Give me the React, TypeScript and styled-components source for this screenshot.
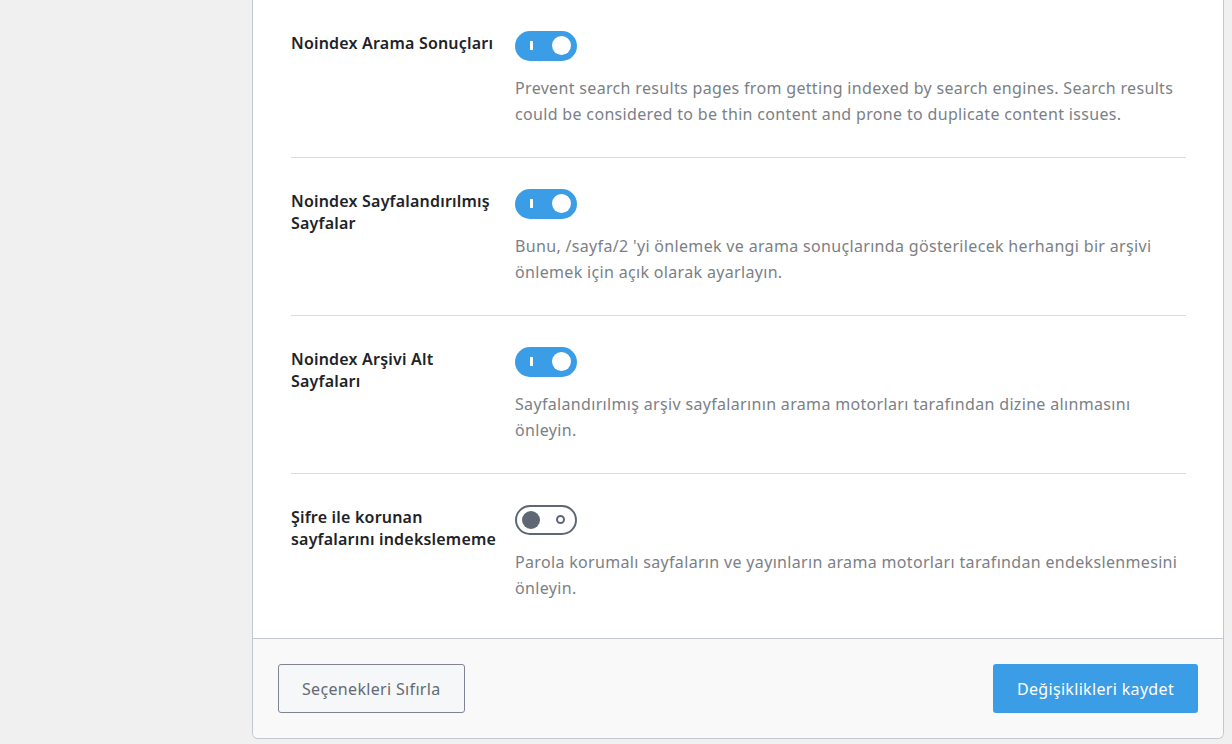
import React, { FC } from 'react';
import styled, { createGlobalStyle } from 'styled-components';

const GlobalStyle = createGlobalStyle`
    html, body {
        margin: 0;
        padding: 0;
        background: #f0f0f1;
        font-family: "Noto Sans", "Open Sans", sans-serif;
        -webkit-font-smoothing: antialiased;
    }
`;

interface SettingRowInterface {
    title: string;
    description: string;
    enabled: boolean;
    last?: boolean;
}

const Toggle: FC<{ enabled: boolean }> = ({ enabled }) => (
    <Switch $on={enabled} role="switch" aria-checked={enabled}>
        {enabled ? <OnMark /> : <OffMark />}
        <Knob $on={enabled} />
    </Switch>
);

const SettingRow: FC<SettingRowInterface> = (props) => {
    return (
        <Row $last={props.last}>
            <Label>{props.title}</Label>
            <Control>
                <Toggle enabled={props.enabled} />
                <Description>{props.description}</Description>
            </Control>
        </Row>
    );
};

const settings: Array<SettingRowInterface> = [
    {
        title: 'Noindex Arama Sonuçları',
        description: 'Prevent search results pages from getting indexed by search engines. Search results could be considered to be thin content and prone to duplicate content issues.',
        enabled: true,
    },
    {
        title: 'Noindex Sayfalandırılmış Sayfalar',
        description: "Bunu, /sayfa/2 'yi önlemek ve arama sonuçlarında gösterilecek herhangi bir arşivi önlemek için açık olarak ayarlayın.",
        enabled: true,
    },
    {
        title: 'Noindex Arşivi Alt Sayfaları',
        description: 'Sayfalandırılmış arşiv sayfalarının arama motorları tarafından dizine alınmasını önleyin.',
        enabled: true,
    },
    {
        title: 'Şifre ile korunan sayfalarını indekslememe',
        description: 'Parola korumalı sayfaların ve yayınların arama motorları tarafından endekslenmesini önleyin.',
        enabled: false,
        last: true,
    },
];

const App: FC = () => {
    return (
        <Page>
            <GlobalStyle />
            <Panel>
                <Body>
                    {settings.map((item) => (
                        <SettingRow key={item.title} {...item} />
                    ))}
                </Body>
                <Footer>
                    <ResetButton>Seçenekleri Sıfırla</ResetButton>
                    <SaveButton>Değişiklikleri kaydet</SaveButton>
                </Footer>
            </Panel>
        </Page>
    );
};

const Page = styled.div`
    min-height: 744px;
    padding-left: 252px;
    padding-right: 8px;
    box-sizing: border-box;
`;

const Panel = styled.div`
    width: 972px;
    background: #fff;
    border: 1px solid #c3c8d0;
    border-top: none;
    border-radius: 0 0 6px 6px;
    box-sizing: border-box;
    overflow: hidden;
`;

const Body = styled.div`
    padding: 0 37px 7px 38px;
`;

const Row = styled.div<{ $last?: boolean }>`
    display: flex;
    padding: 31px 0 30px;
    border-bottom: ${(p) => (p.$last ? 'none' : '1px solid #dcdcde')};
`;

const Label = styled.div`
    width: 224px;
    flex-shrink: 0;
    padding-right: 10px;
    box-sizing: border-box;
    font-size: 16px;
    font-weight: 600;
    line-height: 22px;
    letter-spacing: 0.2px;
    color: #1d2327;
    padding-top: 1px;
`;

const Control = styled.div`
    flex: 1;
    display: flex;
    flex-direction: column;
    align-items: flex-start;
`;

const Switch = styled.div<{ $on: boolean }>`
    position: relative;
    width: 62px;
    height: 30px;
    border-radius: 15px;
    box-sizing: border-box;
    background: ${(p) => (p.$on ? '#3b9de6' : '#fff')};
    border: ${(p) => (p.$on ? 'none' : '2px solid #5f6674')};
`;

const Knob = styled.span<{ $on: boolean }>`
    position: absolute;
    top: ${(p) => (p.$on ? '5px' : '4px')};
    left: ${(p) => (p.$on ? '37px' : '5px')};
    width: ${(p) => (p.$on ? '19px' : '18px')};
    height: ${(p) => (p.$on ? '19px' : '18px')};
    border-radius: 50%;
    background: ${(p) => (p.$on ? '#fff' : '#5f6674')};
`;

const OnMark = styled.span`
    position: absolute;
    left: 15px;
    top: 10px;
    width: 3px;
    height: 9px;
    background: #fff;
`;

const OffMark = styled.span`
    position: absolute;
    right: 10px;
    top: 8px;
    width: 9px;
    height: 9px;
    border: 2px solid #5f6674;
    border-radius: 50%;
    box-sizing: border-box;
`;

const Description = styled.p`
    margin: 14px 0 0;
    font-size: 16px;
    line-height: 26px;
    letter-spacing: 0.33px;
    color: #7b7f86;
`;

const Footer = styled.div`
    display: flex;
    justify-content: space-between;
    align-items: center;
    padding: 25px;
    background: #f9f9fa;
    border-top: 1px solid #c3c8d0;
`;

const ResetButton = styled.button`
    height: 49px;
    padding: 0 23px;
    font-family: inherit;
    font-size: 16px;
    letter-spacing: 0.33px;
    color: #646a73;
    background: #f6f7f8;
    border: 1px solid #7e8590;
    border-radius: 3px;
`;

const SaveButton = styled.button`
    height: 49px;
    padding: 0 24px;
    font-family: inherit;
    font-size: 16px;
    letter-spacing: 0.33px;
    color: #fff;
    background: #3b9de6;
    border: none;
    border-radius: 3px;
`;

export default App;
